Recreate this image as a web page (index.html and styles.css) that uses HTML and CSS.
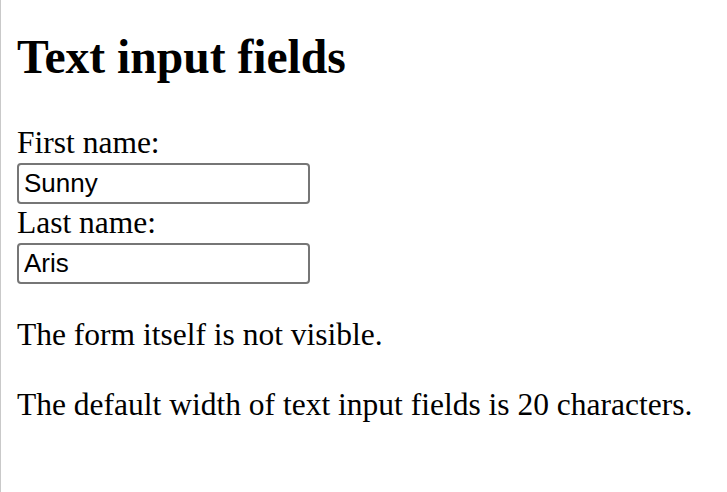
FILE: index.html
```html
<!DOCTYPE html>
<html lang="en">
<head>
<meta charset="utf-8">
<title>Text input fields</title>
<link rel="stylesheet" href="styles.css">
</head>
<body>
<section class="page">
  <h1 class="title">Text input fields</h1>
  <form class="name-form">
    <label class="field-label" for="fname">First name:</label>
    <input class="text-field" type="text" id="fname" name="fname" value="Sunny">
    <label class="field-label" for="lname">Last name:</label>
    <input class="text-field" type="text" id="lname" name="lname" value="Aris">
  </form>
  <p class="note">The form itself is not visible.</p>
  <p class="note">The default width of text input fields is 20 characters.</p>
</section>
</body>
</html>
```

FILE: styles.css
```css
html, body {
  height: 100%;
}

body {
  margin: 0;
  background: #ffffff;
  color: #000000;
  font-family: "Liberation Serif", "Times New Roman", serif;
  font-size: 31.5px;
  box-sizing: border-box;
  border-left: 1px solid #c9c9c9;
  padding-left: 16px;
  overflow: hidden;
}

.page {
  display: flex;
  flex-direction: column;
}

.title {
  font-size: 47.6px;
  font-weight: bold;
  line-height: 56px;
  margin: 29px 0 39px;
}

.name-form {
  display: flex;
  flex-direction: column;
  align-items: flex-start;
  margin: 0;
}

.field-label {
  display: block;
  line-height: 38px;
}

.text-field {
  display: block;
  box-sizing: border-box;
  width: 293px;
  height: 41px;
  margin: 1px 0 0;
  padding: 0 5px;
  border: 2px solid #767676;
  border-radius: 4px;
  background: #ffffff;
  color: #000000;
  font-family: "Liberation Sans", Arial, sans-serif;
  font-size: 26px;
  outline: none;
}

.note {
  line-height: 38px;
  margin: 32px 0 0;
}
```
